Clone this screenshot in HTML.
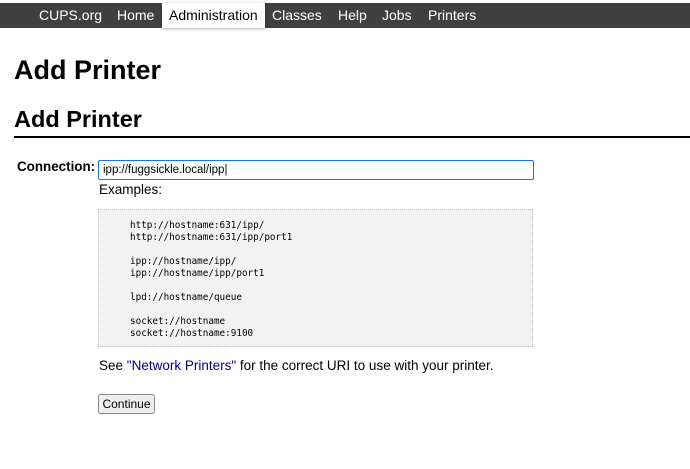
<!DOCTYPE html>
<html><head><style>
body{margin:0;background:#fff;font-family:"Liberation Sans",sans-serif;color:#000;}
.nav{position:absolute;top:3px;left:0;width:690px;height:25px;background:#404040;}
.nav span{position:absolute;top:4px;color:#fff;font-size:14px;}
.nav .act{top:0;height:25px;background:#fff;color:#000;box-shadow:0 1px 3px rgba(0,0,0,.3);padding:0 7px;line-height:25px;}
h1{position:absolute;left:14px;top:55px;margin:0;font-size:27px;}
h2{position:absolute;left:14px;top:106px;margin:0;font-size:23.5px;}
.rule{position:absolute;left:14px;top:136px;width:676px;height:2px;background:#000;}
.lbl{position:absolute;left:17px;top:159px;font-weight:bold;font-size:13.4px;}
.inp{position:absolute;left:98px;top:160px;width:430px;height:18px;border:1.5px solid #1a73e8;border-radius:2px;font-size:11.5px;line-height:18px;padding-left:4px;box-sizing:content-box;}
.ex{position:absolute;left:99px;top:182px;font-size:13.5px;}
pre{position:absolute;left:98px;top:209px;width:435px;height:138px;margin:0;background:#f2f2f2;border:1px dotted #bbb;font-family:"DejaVu Sans Mono",monospace;font-size:9.3px;line-height:12px;padding:10px 0 0 31px;box-sizing:border-box;}
.see{position:absolute;left:99px;top:358px;font-size:13.5px;}
.see a{color:#00008b;text-decoration:none;}
.btn{position:absolute;left:98px;top:394px;width:55px;height:18px;border:1px solid #888;border-radius:3px;background:#eee;font-size:12px;text-align:center;line-height:18px;}
</style></head><body>
<div class="nav">
<span style="left:39px">CUPS.org</span>
<span style="left:117px">Home</span>
<span class="act" style="left:162px">Administration</span>
<span style="left:272px">Classes</span>
<span style="left:338px">Help</span>
<span style="left:382px">Jobs</span>
<span style="left:428px">Printers</span>
</div>
<h1>Add Printer</h1>
<h2>Add Printer</h2>
<div class="rule"></div>
<div class="lbl">Connection:</div>
<div class="inp">ipp://fuggsickle.local/ipp|</div>
<div class="ex">Examples:</div>
<pre>http://hostname:631/ipp/
http://hostname:631/ipp/port1

ipp://hostname/ipp/
ipp://hostname/ipp/port1

lpd://hostname/queue

socket://hostname
socket://hostname:9100</pre>
<div class="see">See <a>"Network Printers"</a> for the correct URI to use with your printer.</div>
<div class="btn">Continue</div>
</body></html>
